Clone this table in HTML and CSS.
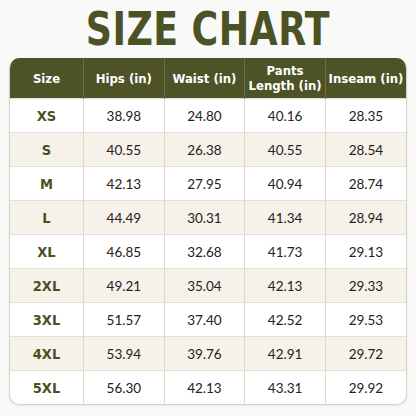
FILE: index.html
```html
<!DOCTYPE html>
<html>
<head>
<meta charset="utf-8">
<link rel="stylesheet" href="styles.css">
</head>
<body>
<div class="page">
  <h1 class="title"><span class="title-text">SIZE CHART</span></h1>
  <div class="card">
    <table class="chart">
      <thead>
        <tr><th>Size</th><th>Hips (in)</th><th>Waist (in)</th><th>Pants<br>Length (in)</th><th>Inseam (in)</th></tr>
      </thead>
      <tbody>
        <tr><td class="sz">XS</td><td>38.98</td><td>24.80</td><td>40.16</td><td>28.35</td></tr>
        <tr><td class="sz">S</td><td>40.55</td><td>26.38</td><td>40.55</td><td>28.54</td></tr>
        <tr><td class="sz">M</td><td>42.13</td><td>27.95</td><td>40.94</td><td>28.74</td></tr>
        <tr><td class="sz">L</td><td>44.49</td><td>30.31</td><td>41.34</td><td>28.94</td></tr>
        <tr><td class="sz">XL</td><td>46.85</td><td>32.68</td><td>41.73</td><td>29.13</td></tr>
        <tr><td class="sz">2XL</td><td>49.21</td><td>35.04</td><td>42.13</td><td>29.33</td></tr>
        <tr><td class="sz">3XL</td><td>51.57</td><td>37.40</td><td>42.52</td><td>29.53</td></tr>
        <tr><td class="sz">4XL</td><td>53.94</td><td>39.76</td><td>42.91</td><td>29.72</td></tr>
        <tr><td class="sz">5XL</td><td>56.30</td><td>42.13</td><td>43.31</td><td>29.92</td></tr>
      </tbody>
    </table>
  </div>
</div>
</body>
</html>
```
FILE: styles.css
```css
html, body {
  margin: 0;
  padding: 0;
  background: #f9f9f7;
}
.page {
  width: 416px;
  height: 416px;
  padding: 0 9px;
  box-sizing: border-box;
}
.title {
  margin: 0;
  height: 58px;
  display: flex;
  align-items: center;
  justify-content: center;
  font-family: "DejaVu Sans", sans-serif;
  font-stretch: condensed;
  font-weight: bold;
  font-size: 47px;
  color: #4c5226;
  padding-bottom: 2px;
  box-sizing: border-box;
}
.title-text {
  display: inline-block;
  transform: scaleX(0.86);
  letter-spacing: 0.5px;
}
.card {
  border-radius: 10px;
  overflow: hidden;
  border: 1px solid #d6d3c6;
  border-top: none;
  box-shadow: 0 1px 2px rgba(0,0,0,0.08);
  background: #fff;
}
.chart {
  width: 100%;
  border-collapse: collapse;
  table-layout: fixed;
}
.chart th:first-child { width: 73px; }
.chart th {
  background: #4d5327;
  color: #fff;
  height: 40px;
  padding: 0;
  font-family: "DejaVu Sans", sans-serif;
  font-stretch: condensed;
  font-weight: bold;
  font-size: 13px;
  line-height: 15px;
  border-left: 1px solid #6b7046;
}
.chart th:first-child, .chart td:first-child { border-left: none; }
.chart td {
  height: 33px;
  padding: 0;
  text-align: center;
  font-family: Lato, sans-serif;
  font-size: 13.5px;
  color: #222;
  border-left: 1px solid #dcd9cc;
  border-top: 1px solid #e2dfd3;
}
.chart tbody tr:nth-child(even) td { background: #f6f2e9; }
.chart td.sz {
  font-family: "DejaVu Sans", sans-serif;
  font-stretch: condensed;
  font-weight: bold;
  font-size: 14.5px;
  color: #4a5024;
}
```
